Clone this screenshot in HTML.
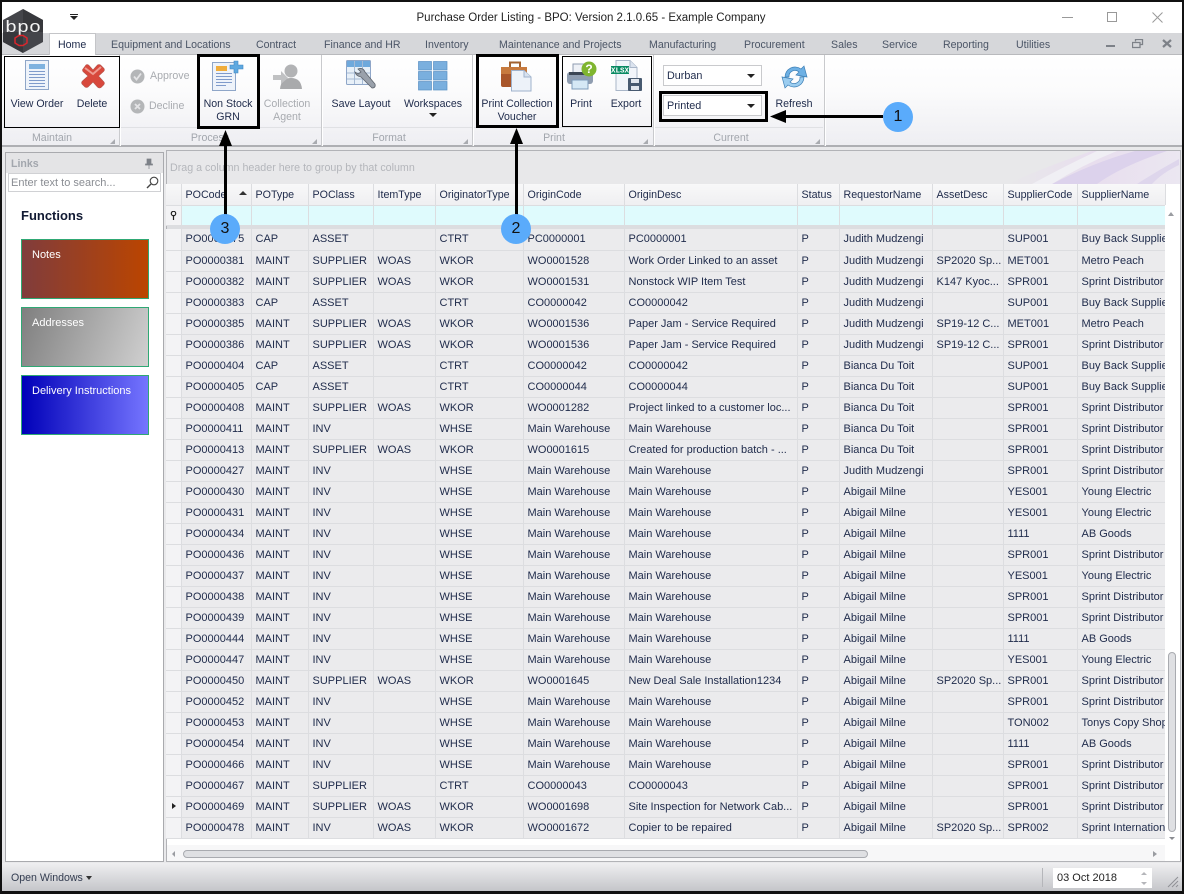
<!DOCTYPE html>
<html><head><meta charset="utf-8"><title>Purchase Order Listing</title>
<style>
*{box-sizing:border-box}
html,body{margin:0;padding:0}
body{width:1184px;height:894px;overflow:hidden;position:relative;background:#e9e9eb;font-family:"Liberation Sans",sans-serif;font-size:11px;color:#1e2a4a}
.a{position:absolute}
.t{position:absolute;white-space:nowrap}
.c{text-align:center;transform:translateX(-50%)}
.tab{position:absolute;top:39px;white-space:nowrap;color:#4b5566;font-size:10.6px;line-height:13px}
.lbl{position:absolute;top:132px;color:#a2a6ad;font-size:10.6px;line-height:13px;white-space:nowrap;transform:translateX(-50%)}
.sep{position:absolute;top:55px;height:91px;width:1px;background:#c9cacd;box-shadow:1px 0 0 #fff}
.big{position:absolute;white-space:nowrap;text-align:center;line-height:13px;font-size:10.6px;transform:translateX(-50%);color:#1e2a4a}
.corner{position:absolute;top:139px;width:0;height:0;border-left:5px solid transparent;border-bottom:5px solid #a9abb0}
.box{position:absolute;border:1px solid #000}
.bx3{position:absolute;border:3px solid #000}
.combo{position:absolute;left:663px;width:99px;height:21px;background:#fff;border:1px solid #c9cacd;line-height:19px;padding:1px 0 0 3px;font-size:10.8px;color:#1e2a4a}
.combo i{position:absolute;right:6px;top:8px;border-left:4px solid transparent;border-right:4px solid transparent;border-top:4px solid #222}
table{border-collapse:collapse;table-layout:fixed;position:absolute;left:166px;width:999px}
td,th{padding:0 0 0 4px;overflow:hidden;white-space:nowrap;font-weight:normal;text-align:left;font-size:11px;color:#1e2a4a;border-right:1px solid #dcdde0;border-bottom:1px solid #dcdde0}
#g td{height:21px;line-height:20px;background:#ebebed}
#g td:first-child{background:#f3f3f5;padding:0}
#h th{height:21px;background:linear-gradient(#f8f8f9,#efeff1);line-height:18px;padding-top:2px;font-size:10.7px}
#h td{height:20px;background:#dffbfd;padding:0}
.btn{position:absolute;left:21px;width:128px;height:60px;border:1px solid #2fa874;color:#fff;padding:8px 0 0 10px;line-height:14px;font-size:11px}
.circ{position:absolute;width:30px;height:30px;border-radius:50%;background:#5aabfb;color:#111;text-align:center;line-height:30px;font-size:16px}
</style></head><body>

<!-- title bar -->
<div class="a" style="left:0;top:0;width:1184px;height:33px;background:#fff"></div>
<div class="t c" style="left:591px;top:11px;font-size:11.5px;line-height:14px;color:#222">Purchase Order Listing - BPO: Version 2.1.0.65 - Example Company</div>
<div class="a" style="left:70px;top:14px;width:8px;height:1px;background:#222"></div>
<div class="a" style="left:70px;top:16px;border-left:4px solid transparent;border-right:4px solid transparent;border-top:4px solid #222"></div>
<div class="a" style="left:1062px;top:17px;width:11px;height:1px;background:#999"></div>
<div class="a" style="left:1107px;top:12px;width:10px;height:10px;border:1px solid #999"></div>
<svg class="a" style="left:1152px;top:12px" width="11" height="11"><path d="M0.5 0.5L10.5 10.5M10.5 0.5L0.5 10.5" stroke="#999" stroke-width="1"/></svg>

<!-- tab strip -->
<div class="a" style="left:0;top:33px;width:1184px;height:22px;background:#d6d7da;border-bottom:1px solid #b9babd"></div>
<div class="a" style="left:49px;top:33px;width:47px;height:23px;background:#fff;border:1px solid #c4c5c8;border-bottom:none"></div>
<div class="tab" style="left:58px;color:#1e2a4a">Home</div>
<div class="tab" style="left:111px">Equipment and Locations</div>
<div class="tab" style="left:256px">Contract</div>
<div class="tab" style="left:324px">Finance and HR</div>
<div class="tab" style="left:425px">Inventory</div>
<div class="tab" style="left:499px">Maintenance and Projects</div>
<div class="tab" style="left:649px">Manufacturing</div>
<div class="tab" style="left:744px">Procurement</div>
<div class="tab" style="left:831px">Sales</div>
<div class="tab" style="left:882px">Service</div>
<div class="tab" style="left:943px">Reporting</div>
<div class="tab" style="left:1016px">Utilities</div>
<div class="a" style="left:1106px;top:45px;width:9px;height:2px;background:#7d8188"></div>
<svg class="a" style="left:1132px;top:39px" width="12" height="10"><path d="M3.500 2.500V.5H10.500V5.500H8.500M.5 3.500H8V8.500H.5Z" fill="none" stroke="#7d8188" stroke-width="1.300"/></svg>
<svg class="a" style="left:1162px;top:39px" width="10" height="9"><path d="M1 1L9 8M9 1L1 8" stroke="#7d8188" stroke-width="2.200"/></svg>

<!-- ribbon -->
<div class="a" style="left:2px;top:55px;width:1180px;height:92px;background:linear-gradient(#fff 0%,#fbfbfc 40%,#eeeef2 100%);border-bottom:2px solid #aeafb3"></div>
<div class="a" style="left:3px;top:127px;width:820px;height:1px;background:#e0e1e4"></div>
<div class="sep" style="left:119px"></div>
<div class="sep" style="left:321px"></div>
<div class="sep" style="left:472px"></div>
<div class="sep" style="left:653px"></div>
<div class="sep" style="left:824px"></div>

<!-- view order icon -->
<svg class="a" style="left:25px;top:60px" width="25" height="31"><rect x=".5" y=".5" width="23" height="29" fill="#eef3fa" stroke="#8fa6c8"/><rect x="4" y="4" width="16" height="5" fill="#7fb2df"/><path d="M4 11.500H20M4 14.500H20M4 17.500H20M4 20.500H20M4 23.500H20M4 26.500H20" stroke="#7f9bcb"/></svg>
<!-- delete icon -->
<svg class="a" style="left:80px;top:63px" width="26" height="26"><path d="M3 6L6 2Q7.500 1 9 2.500L13 7L17.500 2Q19 1 20.500 2L24 5.500Q25 7 23.500 8.500L18.500 13L24 19Q25 20.500 23.500 22L21 24.500Q19 25.500 17.500 24L13 19L8 24Q6.500 25 5 24L2 21Q1 19.500 2.500 18L8 13L3 8.500Q2 7 3 6Z" fill="#d8483c" stroke="#b5554c" stroke-width=".6"/><path d="M5 5L13 11L21 4" fill="none" stroke="#ee9a90" stroke-width="2"/></svg>
<div class="big" style="left:37px;top:98px">View Order</div>
<div class="big" style="left:92px;top:98px">Delete</div>
<div class="lbl" style="left:52px">Maintain</div>
<div class="corner" style="left:110px"></div>

<!-- approve/decline -->
<svg class="a" style="left:130px;top:69px" width="15" height="15"><circle cx="7.500" cy="7.500" r="7" fill="#b4b6b8"/><path d="M4 7.500L6.500 10.500L11 4.500" fill="none" stroke="#e4e4e6" stroke-width="1.800"/></svg>
<svg class="a" style="left:130px;top:99px" width="15" height="15"><circle cx="7.500" cy="7.500" r="7" fill="#b4b6b8"/><path d="M5 5L10 10M10 5L5 10" stroke="#e4e4e6" stroke-width="1.800"/></svg>
<div class="t" style="left:150px;top:70px;color:#a8abb0;line-height:13px;font-size:10.6px">Approve</div>
<div class="t" style="left:149px;top:100px;color:#a8abb0;line-height:13px;font-size:10.6px">Decline</div>

<!-- non stock grn icon -->
<svg class="a" style="left:212px;top:60px" width="33" height="32"><rect x=".5" y="2.500" width="23" height="28" fill="#eef3fa" stroke="#8fa6c8"/><rect x="4" y="6" width="11" height="5" fill="#f0ad3c"/><path d="M4 13.500H20M4 16.500H20M4 19.500H20M4 22.500H20M4 25.500H14" stroke="#7f9bcb"/><path d="M22 1H26V5H31V9H26V13H22V9H18V5H22Z" fill="#5fa9e0" stroke="#3f86c2" stroke-width=".6"/></svg>
<div class="big" style="left:228px;top:98px">Non Stock<br>GRN</div>

<!-- collection agent icon -->
<svg class="a" style="left:272px;top:63px" width="31" height="27"><circle cx="19" cy="8" r="6.500" fill="#b2b3b5"/><path d="M8 26Q9 15 19 15Q29 15 30 26Z" fill="#a9aaac"/><path d="M1 12H9V8L16 15L9 21V17H1Z" fill="#c0c1c3"/></svg>
<div class="big" style="left:287px;top:98px;color:#a8abb0">Collection<br>Agent</div>
<div class="lbl" style="left:210px">Process</div>
<div class="corner" style="left:312px"></div>

<!-- save layout -->
<svg class="a" style="left:346px;top:60px" width="31" height="31"><rect x=".5" y=".5" width="24" height="24" rx="1" fill="#e8f0f8" stroke="#8fa6c8"/><rect x="1" y="1" width="23" height="6" fill="#6fa9dc"/><path d="M1 13H24M1 19H24M8.500 1V24M16.500 1V24" stroke="#a6bad4"/><path d="M12 9Q17 7 19 12L29 24Q30 28 26 28L15 17Q10 16 9 12L12 14L15 12Z" fill="#9aa1ab" stroke="#5e646d" stroke-width=".8"/></svg>
<div class="big" style="left:361px;top:98px">Save Layout</div>

<!-- workspaces -->
<svg class="a" style="left:418px;top:61px" width="30" height="30"><g fill="#7aafde" stroke="#5a90c4" stroke-width=".7"><rect x=".5" y=".5" width="13" height="8.500"/><rect x="15.500" y=".5" width="13.500" height="8.500"/><rect x=".5" y="10.500" width="13" height="8.500"/><rect x="15.500" y="10.500" width="13.500" height="8.500"/><rect x=".5" y="20.500" width="13" height="8.500"/><rect x="15.500" y="20.500" width="13.500" height="8.500"/></g></svg>
<div class="big" style="left:433px;top:98px">Workspaces</div>
<div class="a" style="left:429px;top:113px;border-left:4px solid transparent;border-right:4px solid transparent;border-top:4px solid #222"></div>
<div class="lbl" style="left:389px">Format</div>
<div class="corner" style="left:463px"></div>

<!-- print collection voucher -->
<svg class="a" style="left:500px;top:60px" width="33" height="32"><path d="M10 7V2.500H20V7" fill="none" stroke="#a2622f" stroke-width="2"/><rect x="1" y="7" width="26" height="20" rx="2" fill="#a9562a"/><rect x="1" y="7" width="26" height="7" fill="#c77a3e"/><rect x="12" y="12" width="4" height="4" fill="#edc65c"/><path d="M11.500 10.500H24L31 17V31H11.500Z" fill="#edf2f9" stroke="#9fb2cc"/><path d="M24 10.500V17H31" fill="#d8e2ef" stroke="#9fb2cc"/></svg>
<div class="big" style="left:517px;top:98px">Print Collection<br>Voucher</div>

<!-- print -->
<svg class="a" style="left:566px;top:61px" width="32" height="30"><rect x="7" y="3" width="17" height="10" fill="#eef1f6" stroke="#8f9cb0"/><rect x="1" y="11" width="26" height="12" rx="3" fill="#8f9db0"/><rect x="3" y="11" width="22" height="3" fill="#3c4654"/><rect x="6" y="19" width="16" height="9" fill="#d5e8f5" stroke="#7f9cba"/><circle cx="23" cy="8" r="7.500" fill="#7fb52f"/><text x="23" y="12" font-family="Liberation Sans,sans-serif" font-size="12" font-weight="bold" fill="#fff" text-anchor="middle">?</text></svg>
<div class="big" style="left:581px;top:98px">Print</div>
<!-- export -->
<svg class="a" style="left:611px;top:60px" width="32" height="32"><path d="M5 .5H19L26 7.500V30.500H5Z" fill="#f2f5fa" stroke="#a9b6c8"/><path d="M19 .5V7.500H26" fill="#dce4ef" stroke="#a9b6c8"/><rect x="0" y="6" width="18" height="8" fill="#0a8a63"/><text x="9" y="12.500" font-family="Liberation Mono,monospace" font-size="7.500" font-weight="bold" fill="#fff" text-anchor="middle">XLSX</text><rect x="17" y="18" width="14" height="13" rx="1" fill="#485a70"/><rect x="20" y="19" width="8" height="4" fill="#e3e8ef"/><rect x="20" y="26" width="8" height="4" fill="#e3e8ef"/></svg>
<div class="big" style="left:626px;top:98px">Export</div>
<div class="lbl" style="left:554px">Print</div>
<div class="corner" style="left:643px"></div>

<!-- current -->
<div class="combo" style="top:65px">Durban<i></i></div>
<div class="combo" style="top:95px">Printed<i></i></div>
<svg class="a" style="left:779px;top:63px" width="31" height="28"><path d="M6 14A10 10 0 0 1 22 6L25 3L28 14L17 12L20 9A6 6 0 0 0 10 14Z" fill="#6db0e4" stroke="#3d7fb5" stroke-width=".7"/><path d="M25 14A10 10 0 0 1 9 22L6 25L3 14L14 16L11 19A6 6 0 0 0 21 14Z" fill="#9bcdf0" stroke="#3d7fb5" stroke-width=".7"/></svg>
<div class="big" style="left:794px;top:98px">Refresh</div>
<div class="lbl" style="left:731px">Current</div>
<div class="corner" style="left:815px"></div>

<!-- left panel -->
<div class="a" style="left:5px;top:152px;width:159px;height:710px;background:#fff;border:1px solid #a9aaae"></div>
<div class="a" style="left:6px;top:153px;width:157px;height:20px;background:#e4e4e6"></div>
<div class="t" style="left:11px;top:158px;font-weight:bold;color:#a2a6ad;line-height:13px;font-size:10.6px">Links</div>
<svg class="a" style="left:144px;top:158px" width="10" height="11"><path d="M3 1H7V6H8.500V7H1.500V6H3ZM5 7V11" fill="#7d8188" stroke="#7d8188" stroke-width=".7"/></svg>
<div class="a" style="left:8px;top:173px;width:153px;height:19px;background:#fff;border:1px solid #d0d1d4"></div>
<div class="t" style="left:11px;top:177px;color:#8a8d93;line-height:13px">Enter text to search...</div>
<svg class="a" style="left:146px;top:176px" width="13" height="13"><circle cx="8" cy="5" r="3.800" fill="none" stroke="#444" stroke-width="1.100"/><path d="M5 8L1 12" stroke="#444" stroke-width="1.400"/></svg>
<div class="t" style="left:21px;top:208px;font-weight:bold;font-size:13px;line-height:15px;color:#111a33">Functions</div>
<div class="btn" style="top:239px;background:linear-gradient(90deg,#803c3c,#bb4500)">Notes</div>
<div class="btn" style="top:307px;background:linear-gradient(110deg,#7f7f7f,#d0d0d0)">Addresses</div>
<div class="btn" style="top:375px;background:linear-gradient(90deg,#0000b8,#7575ff)">Delivery Instructions</div>

<!-- grid panel -->
<div class="a" style="left:166px;top:150px;width:1015px;height:712px;background:#fff;border:1px solid #b2b3b7"></div>
<div class="a" style="left:167px;top:151px;width:1013px;height:33px;background:#e8e8ea;overflow:hidden">
<svg width="1013" height="33" style="position:absolute;left:0;top:0"><defs><linearGradient id="p" x1="0" x2="1"><stop offset="0" stop-color="#e8e8ea"/><stop offset=".5" stop-color="#e8deee"/><stop offset="1" stop-color="#ebe7f1"/></linearGradient></defs><path d="M840 33Q880 15 925 0H1013V33Z" fill="url(#p)"/><path d="M885 33Q925 12 968 0H1000Q955 15 930 33Z" fill="#dcd2ec"/><path d="M865 33Q900 14 930 0H950Q915 14 885 33Z" fill="#f0eff4"/><path d="M970 33Q990 20 1012 8V14Q995 22 985 33Z" fill="#ded6ec"/></svg></div>
<div class="t" style="left:170px;top:162px;color:#b4b6bb;line-height:13px;font-size:10.7px">Drag a column header here to group by that column</div>

<table id="h" style="top:184px">
<colgroup><col style="width:15px"><col style="width:70px"><col style="width:57px"><col style="width:65px"><col style="width:62px"><col style="width:88px"><col style="width:101px"><col style="width:173px"><col style="width:42px"><col style="width:93px"><col style="width:71px"><col style="width:74px"><col style="width:88px"></colgroup>
<tr><th></th><th>POCode</th><th>POType</th><th>POClass</th><th>ItemType</th><th>OriginatorType</th><th>OriginCode</th><th>OriginDesc</th><th>Status</th><th>RequestorName</th><th>AssetDesc</th><th>SupplierCode</th><th>SupplierName</th></tr>
<tr><td style="background:#f3f3f5"></td><td></td><td></td><td></td><td></td><td></td><td></td><td></td><td></td><td></td><td></td><td></td><td></td></tr>
</table>
<div class="a" style="left:167px;top:225px;width:998px;height:4px;background:#dcdde0"></div>
<div class="a" style="left:239px;top:191px;border-left:4px solid transparent;border-right:4px solid transparent;border-bottom:4px solid #333"></div>
<svg class="a" style="left:170px;top:211px" width="7" height="9"><circle cx="3.500" cy="2.500" r="2.200" fill="none" stroke="#222" stroke-width="1.200"/><path d="M3.500 4V9" stroke="#222" stroke-width="1.200"/></svg>

<table id="g" style="top:229px">
<colgroup><col style="width:15px"><col style="width:70px"><col style="width:57px"><col style="width:65px"><col style="width:62px"><col style="width:88px"><col style="width:101px"><col style="width:173px"><col style="width:42px"><col style="width:93px"><col style="width:71px"><col style="width:74px"><col style="width:88px"></colgroup>
<tr><td></td><td>PO0000375</td><td>CAP</td><td>ASSET</td><td></td><td>CTRT</td><td>PC0000001</td><td>PC0000001</td><td>P</td><td>Judith Mudzengi</td><td></td><td>SUP001</td><td>Buy Back Supplier</td></tr>
<tr><td></td><td>PO0000381</td><td>MAINT</td><td>SUPPLIER</td><td>WOAS</td><td>WKOR</td><td>WO0001528</td><td>Work Order Linked to an asset</td><td>P</td><td>Judith Mudzengi</td><td>SP2020 Sp...</td><td>MET001</td><td>Metro Peach</td></tr>
<tr><td></td><td>PO0000382</td><td>MAINT</td><td>SUPPLIER</td><td>WOAS</td><td>WKOR</td><td>WO0001531</td><td>Nonstock WIP Item Test</td><td>P</td><td>Judith Mudzengi</td><td>K147 Kyoc...</td><td>SPR001</td><td>Sprint Distributor</td></tr>
<tr><td></td><td>PO0000383</td><td>CAP</td><td>ASSET</td><td></td><td>CTRT</td><td>CO0000042</td><td>CO0000042</td><td>P</td><td>Judith Mudzengi</td><td></td><td>SUP001</td><td>Buy Back Supplier</td></tr>
<tr><td></td><td>PO0000385</td><td>MAINT</td><td>SUPPLIER</td><td>WOAS</td><td>WKOR</td><td>WO0001536</td><td>Paper Jam - Service Required</td><td>P</td><td>Judith Mudzengi</td><td>SP19-12 C...</td><td>MET001</td><td>Metro Peach</td></tr>
<tr><td></td><td>PO0000386</td><td>MAINT</td><td>SUPPLIER</td><td>WOAS</td><td>WKOR</td><td>WO0001536</td><td>Paper Jam - Service Required</td><td>P</td><td>Judith Mudzengi</td><td>SP19-12 C...</td><td>SPR001</td><td>Sprint Distributor</td></tr>
<tr><td></td><td>PO0000404</td><td>CAP</td><td>ASSET</td><td></td><td>CTRT</td><td>CO0000042</td><td>CO0000042</td><td>P</td><td>Bianca Du Toit</td><td></td><td>SUP001</td><td>Buy Back Supplier</td></tr>
<tr><td></td><td>PO0000405</td><td>CAP</td><td>ASSET</td><td></td><td>CTRT</td><td>CO0000044</td><td>CO0000044</td><td>P</td><td>Bianca Du Toit</td><td></td><td>SUP001</td><td>Buy Back Supplier</td></tr>
<tr><td></td><td>PO0000408</td><td>MAINT</td><td>SUPPLIER</td><td>WOAS</td><td>WKOR</td><td>WO0001282</td><td>Project linked to a customer loc...</td><td>P</td><td>Bianca Du Toit</td><td></td><td>SPR001</td><td>Sprint Distributor</td></tr>
<tr><td></td><td>PO0000411</td><td>MAINT</td><td>INV</td><td></td><td>WHSE</td><td>Main Warehouse</td><td>Main Warehouse</td><td>P</td><td>Bianca Du Toit</td><td></td><td>SPR001</td><td>Sprint Distributor</td></tr>
<tr><td></td><td>PO0000413</td><td>MAINT</td><td>SUPPLIER</td><td>WOAS</td><td>WKOR</td><td>WO0001615</td><td>Created for production batch - ...</td><td>P</td><td>Bianca Du Toit</td><td></td><td>SPR001</td><td>Sprint Distributor</td></tr>
<tr><td></td><td>PO0000427</td><td>MAINT</td><td>INV</td><td></td><td>WHSE</td><td>Main Warehouse</td><td>Main Warehouse</td><td>P</td><td>Judith Mudzengi</td><td></td><td>SPR001</td><td>Sprint Distributor</td></tr>
<tr><td></td><td>PO0000430</td><td>MAINT</td><td>INV</td><td></td><td>WHSE</td><td>Main Warehouse</td><td>Main Warehouse</td><td>P</td><td>Abigail Milne</td><td></td><td>YES001</td><td>Young Electric</td></tr>
<tr><td></td><td>PO0000431</td><td>MAINT</td><td>INV</td><td></td><td>WHSE</td><td>Main Warehouse</td><td>Main Warehouse</td><td>P</td><td>Abigail Milne</td><td></td><td>YES001</td><td>Young Electric</td></tr>
<tr><td></td><td>PO0000434</td><td>MAINT</td><td>INV</td><td></td><td>WHSE</td><td>Main Warehouse</td><td>Main Warehouse</td><td>P</td><td>Abigail Milne</td><td></td><td>1111</td><td>AB Goods</td></tr>
<tr><td></td><td>PO0000436</td><td>MAINT</td><td>INV</td><td></td><td>WHSE</td><td>Main Warehouse</td><td>Main Warehouse</td><td>P</td><td>Abigail Milne</td><td></td><td>SPR001</td><td>Sprint Distributor</td></tr>
<tr><td></td><td>PO0000437</td><td>MAINT</td><td>INV</td><td></td><td>WHSE</td><td>Main Warehouse</td><td>Main Warehouse</td><td>P</td><td>Abigail Milne</td><td></td><td>YES001</td><td>Young Electric</td></tr>
<tr><td></td><td>PO0000438</td><td>MAINT</td><td>INV</td><td></td><td>WHSE</td><td>Main Warehouse</td><td>Main Warehouse</td><td>P</td><td>Abigail Milne</td><td></td><td>SPR001</td><td>Sprint Distributor</td></tr>
<tr><td></td><td>PO0000439</td><td>MAINT</td><td>INV</td><td></td><td>WHSE</td><td>Main Warehouse</td><td>Main Warehouse</td><td>P</td><td>Abigail Milne</td><td></td><td>SPR001</td><td>Sprint Distributor</td></tr>
<tr><td></td><td>PO0000444</td><td>MAINT</td><td>INV</td><td></td><td>WHSE</td><td>Main Warehouse</td><td>Main Warehouse</td><td>P</td><td>Abigail Milne</td><td></td><td>1111</td><td>AB Goods</td></tr>
<tr><td></td><td>PO0000447</td><td>MAINT</td><td>INV</td><td></td><td>WHSE</td><td>Main Warehouse</td><td>Main Warehouse</td><td>P</td><td>Abigail Milne</td><td></td><td>YES001</td><td>Young Electric</td></tr>
<tr><td></td><td>PO0000450</td><td>MAINT</td><td>SUPPLIER</td><td>WOAS</td><td>WKOR</td><td>WO0001645</td><td>New Deal Sale Installation1234</td><td>P</td><td>Abigail Milne</td><td>SP2020 Sp...</td><td>SPR001</td><td>Sprint Distributor</td></tr>
<tr><td></td><td>PO0000452</td><td>MAINT</td><td>INV</td><td></td><td>WHSE</td><td>Main Warehouse</td><td>Main Warehouse</td><td>P</td><td>Abigail Milne</td><td></td><td>SPR001</td><td>Sprint Distributor</td></tr>
<tr><td></td><td>PO0000453</td><td>MAINT</td><td>INV</td><td></td><td>WHSE</td><td>Main Warehouse</td><td>Main Warehouse</td><td>P</td><td>Abigail Milne</td><td></td><td>TON002</td><td>Tonys Copy Shop</td></tr>
<tr><td></td><td>PO0000454</td><td>MAINT</td><td>INV</td><td></td><td>WHSE</td><td>Main Warehouse</td><td>Main Warehouse</td><td>P</td><td>Abigail Milne</td><td></td><td>1111</td><td>AB Goods</td></tr>
<tr><td></td><td>PO0000466</td><td>MAINT</td><td>INV</td><td></td><td>WHSE</td><td>Main Warehouse</td><td>Main Warehouse</td><td>P</td><td>Abigail Milne</td><td></td><td>SPR001</td><td>Sprint Distributor</td></tr>
<tr><td></td><td>PO0000467</td><td>MAINT</td><td>SUPPLIER</td><td></td><td>CTRT</td><td>CO0000043</td><td>CO0000043</td><td>P</td><td>Abigail Milne</td><td></td><td>SPR001</td><td>Sprint Distributor</td></tr>
<tr><td></td><td>PO0000469</td><td>MAINT</td><td>SUPPLIER</td><td>WOAS</td><td>WKOR</td><td>WO0001698</td><td>Site Inspection for Network Cab...</td><td>P</td><td>Abigail Milne</td><td></td><td>SPR001</td><td>Sprint Distributor</td></tr>
<tr><td></td><td>PO0000478</td><td>MAINT</td><td>INV</td><td>WOAS</td><td>WKOR</td><td>WO0001672</td><td>Copier to be repaired</td><td>P</td><td>Abigail Milne</td><td>SP2020 Sp...</td><td>SPR002</td><td>Sprint International</td></tr>
</table>
<div class="a" style="left:172px;top:803px;border-top:3px solid transparent;border-bottom:3px solid transparent;border-left:4px solid #222"></div>

<!-- scrollbars -->
<div class="a" style="left:1165px;top:205px;width:15px;height:640px;background:#fff"></div>
<div class="a" style="left:1168px;top:652px;width:8px;height:180px;background:#dfe0e3;border:1px solid #a9abb0;border-radius:4px"></div>
<div class="a" style="left:1168px;top:212px;border-left:3px solid transparent;border-right:3px solid transparent;border-bottom:4px solid #9a9ca1"></div>
<div class="a" style="left:1169px;top:837px;border-left:3px solid transparent;border-right:3px solid transparent;border-top:3px solid #8a8c91"></div>
<div class="a" style="left:167px;top:845px;width:998px;height:16px;background:#f7f7f8"></div>
<div class="a" style="left:183px;top:850px;width:685px;height:8px;background:#dfe0e3;border:1px solid #a9abb0;border-radius:4px"></div>
<div class="a" style="left:172px;top:851px;border-top:3px solid transparent;border-bottom:3px solid transparent;border-right:3px solid #9a9ca1"></div>
<div class="a" style="left:1153px;top:851px;border-top:3px solid transparent;border-bottom:3px solid transparent;border-left:4px solid #9a9ca1"></div>

<!-- status bar -->
<div class="a" style="left:0;top:863px;width:1184px;height:29px;background:linear-gradient(#efeff1,#c3c4c8)"></div>
<div class="t" style="left:11px;top:872px;color:#333c50;line-height:13px;font-size:10.6px">Open Windows</div>
<div class="a" style="left:86px;top:876px;border-left:3.500px solid transparent;border-right:3.500px solid transparent;border-top:4px solid #333"></div>
<div class="a" style="left:1042px;top:868px;width:1px;height:19px;background:#b5b6ba"></div>
<div class="a" style="left:1053px;top:868px;width:99px;height:20px;background:#fff"></div>
<div class="t" style="left:1057px;top:872px;color:#222;line-height:13px">03 Oct 2018</div>
<div class="a" style="left:1141px;top:872px;border-left:3px solid transparent;border-right:3px solid transparent;border-bottom:3px solid #b5b6ba"></div>
<div class="a" style="left:1141px;top:882px;border-left:3px solid transparent;border-right:3px solid transparent;border-top:3px solid #b5b6ba"></div>
<svg class="a" style="left:1167px;top:876px" width="12" height="12"><path d="M1 11L11 1M5 11L11 5M9 11L11 9" stroke="#8f9095"/></svg>

<!-- logo -->
<svg class="a" style="left:2px;top:8px" width="42" height="46"><path d="M21 1L41 12V34L21 45L1 34V12Z" fill="#44454a"/><path d="M21 1L41 12V24H21ZM1 24H21V45L1 34Z" fill="#37383c"/><text x="21" y="24" font-family="Liberation Mono,monospace" font-size="17" fill="#f4f4f4" text-anchor="middle" textLength="36" lengthAdjust="spacingAndGlyphs">bpo</text><path d="M14 31L18 28.500H22L26 31V36L22 38.500H18L14 36Z" transform="translate(-1 -1)" fill="none" stroke="#d9262c" stroke-width="1.500"/></svg>

<!-- annotations -->
<div class="box" style="left:4px;top:56px;width:116px;height:72px"></div>
<div class="box" style="left:562px;top:56px;width:90px;height:71px"></div>
<div class="bx3" style="left:197px;top:54px;width:63px;height:75px"></div>
<div class="bx3" style="left:476px;top:54px;width:83px;height:74px"></div>
<div class="bx3" style="left:659px;top:91px;width:109px;height:31px"></div>

<div class="a" style="left:782px;top:115px;width:101px;height:3px;background:#000"></div>
<svg class="a" style="left:770px;top:110px" width="16" height="13"><path d="M0 6.500L16 0V13Z" fill="#000"/></svg>
<div class="circ" style="left:883px;top:102px">1</div>

<div class="a" style="left:515px;top:140px;width:3px;height:76px;background:#000"></div>
<svg class="a" style="left:510px;top:128px" width="13" height="16"><path d="M6.500 0L13 16H0Z" fill="#000"/></svg>
<div class="circ" style="left:501px;top:214px">2</div>

<div class="a" style="left:224px;top:142px;width:3px;height:74px;background:#000"></div>
<svg class="a" style="left:219px;top:130px" width="13" height="16"><path d="M6.500 0L13 16H0Z" fill="#000"/></svg>
<div class="circ" style="left:210px;top:214px">3</div>

<!-- window frame -->
<div class="a" style="left:0;top:0;width:1184px;height:894px;border:2px solid #111;border-bottom-width:3px;pointer-events:none"></div>
</body></html>
